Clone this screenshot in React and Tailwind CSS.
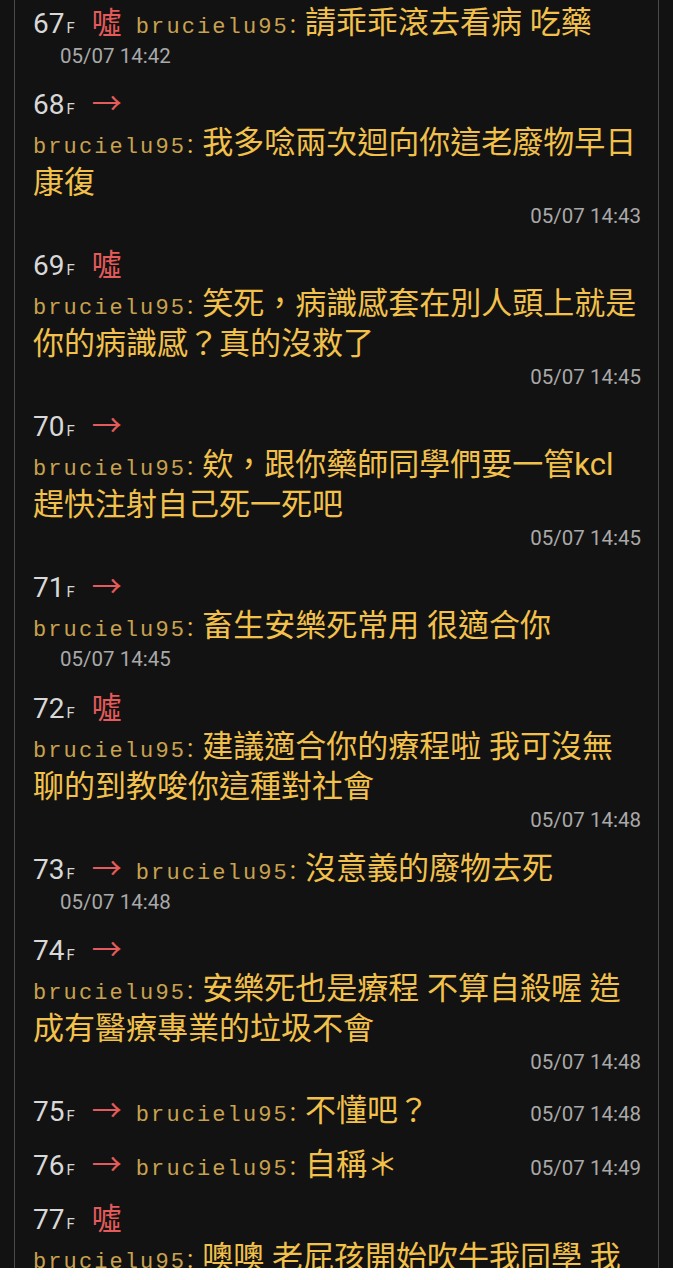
import React from "react"

const ENTRIES = [
    { floor: 67, tag: "噓", inline: true, lines: ["請乖乖滾去看病 吃藥"], time: "05/07 14:42", ts: "left" },
    { floor: 68, tag: "→", lines: ["我多唸兩次迴向你這老廢物早日", "康復"], time: "05/07 14:43", ts: "right" },
    { floor: 69, tag: "噓", lines: ["笑死，病識感套在別人頭上就是", "你的病識感？真的沒救了"], time: "05/07 14:45", ts: "right" },
    { floor: 70, tag: "→", lines: ["欸，跟你藥師同學們要一管kcl", "趕快注射自己死一死吧"], time: "05/07 14:45", ts: "right" },
    { floor: 71, tag: "→", lines: ["畜生安樂死常用 很適合你"], time: "05/07 14:45", ts: "left" },
    { floor: 72, tag: "噓", lines: ["建議適合你的療程啦 我可沒無", "聊的到教唆你這種對社會"], time: "05/07 14:48", ts: "right" },
    { floor: 73, tag: "→", inline: true, lines: ["沒意義的廢物去死"], time: "05/07 14:48", ts: "left" },
    { floor: 74, tag: "→", lines: ["安樂死也是療程 不算自殺喔 造", "成有醫療專業的垃圾不會"], time: "05/07 14:48", ts: "right" },
    { floor: 75, tag: "→", inline: true, lines: ["不懂吧？"], time: "05/07 14:48", ts: "inline" },
    { floor: 76, tag: "→", inline: true, lines: ["自稱＊"], time: "05/07 14:49", ts: "inline" },
    { floor: 77, tag: "噓", lines: ["噢噢 老屁孩開始吹牛我同學 我", "還以為你會說點什麼"], time: "05/07 14:50", ts: "right" },
]

const CJK = "font-['Noto_Sans_CJK_TC',sans-serif]"

function Floor({ floor, tag }) {
    return (
        <span className="flex items-baseline shrink-0">
            <span className="font-['Roboto',sans-serif] text-[28px] text-[#d8d8d8]">{floor}</span>
            <span className="font-['Roboto',sans-serif] text-[15px] text-[#d6d6d6] ml-[2px]">F</span>
            <span className={`${CJK} text-[30px] text-[#e35b5b] ml-[17px]`}>{tag}</span>
        </span>
    )
}

function User({ first }) {
    return (
        <span className={`flex items-baseline shrink-0 ${first ? "" : "ml-[14px]"}`}>
            <span className="font-['Liberation_Mono',monospace] text-[22px] tracking-[2.1px] text-[#c9a24f]">brucielu95</span>
            <span className="font-['Roboto',sans-serif] text-[26px] text-[#f2c14b] ml-[1px] mr-[9px]">:</span>
        </span>
    )
}

function Content({ text }) {
    return <span className="font-['Roboto','Noto_Sans_CJK_TC',sans-serif] text-[31px] text-[#f2c14b] whitespace-nowrap">{text}</span>
}

function Time({ time, className = "" }) {
    return <span className={`font-['Roboto',sans-serif] text-[20.5px] text-[#a9a9a9] whitespace-nowrap ${className}`}>{time}</span>
}

function Entry({ e }) {
    if (e.inline) {
        return (
            <div className={e.ts === "inline" ? "mb-[14px]" : "mb-[13px]"}>
                <div className="flex items-baseline h-[40px] leading-[40px]">
                    <Floor floor={e.floor} tag={e.tag} />
                    <User />
                    <Content text={e.lines[0]} />
                    {e.ts === "inline" && <Time time={e.time} className="ml-auto" />}
                </div>
                {e.ts === "left" && (
                    <div className="mt-[4px] h-[24px] leading-[24px] pl-[27px]">
                        <Time time={e.time} />
                    </div>
                )}
            </div>
        )
    }
    return (
        <div className="mb-[14px]">
            <div className="flex items-baseline h-[42px] leading-[40px]">
                <Floor floor={e.floor} tag={e.tag} />
            </div>
            {e.lines.map((line, i) => (
                <div key={i} className="flex items-baseline h-[40px] leading-[40px]">
                    {i === 0 && <User first />}
                    <Content text={line} />
                </div>
            ))}
            <div className={`mt-[1px] h-[24px] leading-[24px] ${e.ts === "left" ? "pl-[27px]" : "text-right"}`}>
                <Time time={e.time} />
            </div>
        </div>
    )
}

export default function App() {
    return (
        <div className="h-[1280px] w-[673px] flex flex-col bg-[#121212] overflow-hidden">
            <div className="flex-1 overflow-hidden px-[14px]">
                <div className="h-full border-x border-[#4a4a4a] pl-[18px] pr-[17px]">
                    {ENTRIES.map((e) => (
                        <Entry key={e.floor} e={e} />
                    ))}
                </div>
            </div>
            <div className="h-[12px] bg-white shrink-0" />
        </div>
    )
}
